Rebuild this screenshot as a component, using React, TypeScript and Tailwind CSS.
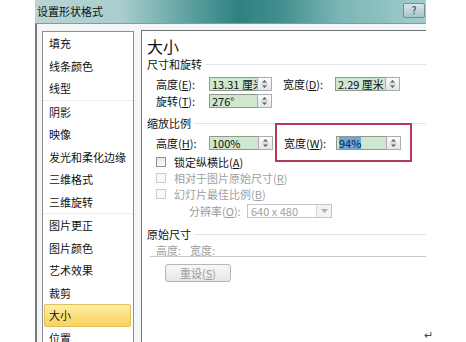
import React from 'react';

const listItems = [
  { name: '填充' },
  { name: '线条颜色' },
  { name: '线型', sep: true },
  { name: '阴影' },
  { name: '映像' },
  { name: '发光和柔化边缘' },
  { name: '三维格式' },
  { name: '三维旋转', sep: true },
  { name: '图片更正' },
  { name: '图片颜色' },
  { name: '艺术效果' },
  { name: '裁剪' },
  { name: '大小', active: true },
  { name: '位置' },
];

const font = { fontFamily: '"Noto Sans CJK SC", "Noto Sans", sans-serif' };

function Spinner() {
  return (
    <div className="w-[15px] h-[14px] border border-[#a9adb2] bg-[linear-gradient(#fbfbfb,#e3e5e8)] flex flex-col items-center justify-center shrink-0">
      <svg width="7" height="10" viewBox="0 0 7 10">
        <path d="M3.5 1 L6 3.5 L1 3.5 Z" fill="#5a5a5a" />
        <line x1="0" y1="5" x2="7" y2="5" stroke="#c4c7cb" strokeWidth="1" />
        <path d="M1 6.5 L6 6.5 L3.5 9 Z" fill="#5a5a5a" />
      </svg>
    </div>
  );
}

function Field({ value, width, selected }: { value: string; width: string; selected?: boolean }) {
  return (
    <div className="flex items-center">
      <div className={`${width} h-[14px] bg-[#cfe6cf] border border-[#8e9a8e] border-r-0 text-[11px] leading-[12px] pl-[2px] overflow-hidden whitespace-nowrap text-[#111]`}>
        {selected ? <span className="bg-[#6ea6dc] text-[#0b1a3a]">{value}</span> : value}
      </div>
      <Spinner />
    </div>
  );
}

function Label({ text, k, w, grey }: { text: string; k: string; w: string; grey?: boolean }) {
  return (
    <span className={`${w} shrink-0 text-[11px] whitespace-nowrap ${grey ? 'text-[#9a9a9a]' : 'text-[#111]'}`}>
      {text}(<span className="underline">{k}</span>):
    </span>
  );
}

function Section({ title }: { title: string }) {
  return (
    <div className="h-[14px] flex items-center pl-[5px] pr-0">
      <span className="text-[11px] text-[#111] whitespace-nowrap">{title}</span>
      <div className="flex-1 h-px bg-[#e2e4e6] ml-[3px]" />
    </div>
  );
}

function Check({ text, k, grey }: { text: string; k: string; grey?: boolean }) {
  return (
    <div className="h-[16px] flex items-center pl-[14px]">
      <div className={`w-[10px] h-[10px] border ${grey ? 'border-[#c9cbcd] bg-[#fafafa]' : 'border-[#8f9296] bg-[linear-gradient(#e8e9ea,#fbfbfb)]'}`} />
      <span className={`ml-[8px] text-[11px] whitespace-nowrap ${grey ? 'text-[#a0a0a0]' : 'text-[#111]'}`}>
        {text}(<span className="underline">{k}</span>)
      </span>
    </div>
  );
}

export default function App() {
  return (
    <div className="w-[466px] h-[342px] bg-white overflow-hidden relative" style={font}>
      <div className="ml-[35px] w-[391px] h-full flex flex-col overflow-hidden">
        {/* Title bar */}
        <div className="h-[23px] shrink-0 flex items-center justify-between pl-[2px] pr-[1px] bg-[linear-gradient(to_right,#b9d5d5_0%,#a9cdcd_22%,#5b9f9f_40%,#2f8282_52%,#3f8d8d_62%,#7bb6b6_78%,#a3cccc_100%)]">
          <span className="text-[11px] text-[#101010] tracking-[0px]">设置形状格式</span>
          <div className="w-[22px] h-[15px] mb-[3px] rounded-[2px] border border-[#6f8f92] bg-[linear-gradient(#d8e6e8,#a9c4c7)] flex items-center justify-center text-[10px] leading-none text-[#1b2b3b]">
            ?
          </div>
        </div>

        {/* Body */}
        <div className="flex-1 flex border-l-2 border-l-[#777a7d] border-t border-t-[#8a9a9c] bg-[#f5f6f7] overflow-hidden">
          {/* Category list */}
          <div className="ml-[5px] mt-[7px] w-[92px] h-[400px] shrink-0 border border-[#8b8e92] bg-white">
            {listItems.map((item) => (
              <div key={item.name} className={item.sep ? 'border-b border-[#eeeeee]' : ''}>
                <div
                  className={`ml-[1px] mr-[2px] h-[22.5px] flex items-center pl-[4px] border rounded-[2px] text-[11px] whitespace-nowrap text-[#111] ${
                    item.active
                      ? 'border-[#e1bf5c] bg-[linear-gradient(#fdf0a8,#fbe07c_50%,#f7d35f)]'
                      : 'border-transparent'
                  }`}
                >
                  {item.name}
                </div>
              </div>
            ))}
          </div>

          {/* Settings panel */}
          <div className="ml-[7px] mt-[6px] flex-1 border-l border-t border-[#6f7276] bg-white relative flex flex-col">
            <div className="mt-[4px] h-[22px] pl-[5px] text-[16px] leading-[22px] text-[#111]">大小</div>
            <Section title="尺寸和旋转" />

            <div className="mt-[5px] h-[16px] flex items-center pl-[14px]">
              <Label text="高度" k="E" w="w-[53px]" />
              <Field value="13.31 厘米" width="w-[48px]" />
              <div className="w-[11px]" />
              <Label text="宽度" k="D" w="w-[52px]" />
              <Field value="2.29 厘米" width="w-[50px]" />
            </div>
            <div className="mt-[1px] h-[16px] flex items-center pl-[14px]">
              <Label text="旋转" k="T" w="w-[53px]" />
              <Field value="276°" width="w-[48px]" />
            </div>

            <div className="mt-[7px]">
              <Section title="缩放比例" />
            </div>
            <div className="mt-[5px] h-[16px] flex items-center pl-[14px]">
              <Label text="高度" k="H" w="w-[53px]" />
              <Field value="100%" width="w-[49px]" />
              <div className="w-[11px]" />
              <Label text="宽度" k="W" w="w-[52px]" />
              <Field value="94%" width="w-[50px]" selected />
            </div>

            <div className="mt-[3px]">
              <Check text="锁定纵横比" k="A" />
              <Check text="相对于图片原始尺寸" k="R" grey />
              <Check text="幻灯片最佳比例" k="B" grey />
            </div>

            <div className="mt-[1px] h-[16px] flex items-center pl-[47px]">
              <Label text="分辨率" k="O" w="w-[58px]" grey />
              <div className="flex items-center h-[14px] border border-[#c3c5c8] bg-white">
                <span className="w-[68px] pl-[3px] text-[11px] leading-[12px] text-[#a0a0a0] whitespace-nowrap">640 x 480</span>
                <div className="w-[15px] h-full border-l border-[#d2d4d6] bg-[#f3f3f3] flex items-center justify-center">
                  <svg width="7" height="4" viewBox="0 0 7 4">
                    <path d="M0 0 L7 0 L3.5 4 Z" fill="#b0b0b0" />
                  </svg>
                </div>
              </div>
            </div>

            <div className="mt-[8px]">
              <Section title="原始尺寸" />
            </div>
            <div className="mt-[3px] ml-[8px] h-[13px] pl-[6px] flex items-center border-b border-[#c6c8ca] text-[11px] text-[#a0a0a0] gap-[9px]">
              <span>高度:</span>
              <span>宽度:</span>
            </div>

            <div className="mt-[7px] ml-[23px] w-[66px] h-[18px] rounded-[3px] border border-[#b4b6b8] bg-[linear-gradient(#f7f7f7,#e6e6e6)] flex items-center justify-center text-[11px] text-[#9c9c9c]">
              重设(<span className="underline">S</span>)
            </div>

            {/* highlight annotation */}
            <div className="absolute left-[133px] top-[92px] w-[137px] h-[39px] border-2 border-[#b63a55]" />
          </div>
        </div>
      </div>

      <span className="absolute left-[424px] top-[326px] text-[11px] text-[#444]">↵</span>
    </div>
  );
}
